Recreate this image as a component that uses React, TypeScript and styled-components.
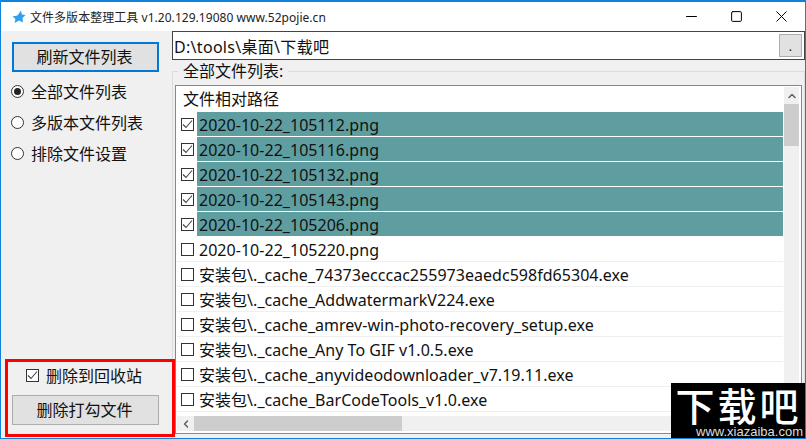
import styled, { createGlobalStyle } from 'styled-components';
import { Minus, Square, X, ChevronUp, ChevronLeft } from 'lucide-react';

const GlobalStyle = createGlobalStyle`
  html, body {
    margin: 0;
    padding: 0;
    overflow: hidden;
  }
`;

const Window = styled.div`
  position: relative;
  width: 806px;
  height: 439px;
  box-sizing: border-box;
  border: 1px solid #0f83dc;
  border-top-width: 2px;
  background: #f0f0f0;
  display: flex;
  flex-direction: column;
  overflow: hidden;
  font-family: "Noto Sans", "Noto Sans CJK SC", sans-serif;
  color: #111;
`;

const TitleBar = styled.div`
  height: 29px;
  flex: none;
  background: #fff;
  display: flex;
  align-items: center;
  padding-left: 11px;
`;

const TitleText = styled.span`
  margin-left: 4px;
  font-size: 12px;
  letter-spacing: 0.04px;
  color: #222;
`;

const WindowButtons = styled.div`
  margin-left: auto;
  padding-right: 1px;
  display: flex;
`;

const WindowButton = styled.div`
  width: 45px;
  height: 27px;
  display: flex;
  align-items: center;
  justify-content: center;
`;

const Body = styled.div`
  flex: 1;
  min-height: 0;
  display: flex;
`;

const Sidebar = styled.div`
  width: 171px;
  flex: none;
  box-sizing: border-box;
  padding: 11px 0 1px 4px;
  display: flex;
  flex-direction: column;
`;

const ActionButton = styled.button<{ $focused?: boolean }>`
  width: 147px;
  height: 30px;
  box-sizing: border-box;
  margin-left: 7px;
  padding: 0 2px 0 0;
  background: #e1e1e1;
  border: ${(p) => (p.$focused ? '2px solid #0078d7' : '1px solid #adadad')};
  font: inherit;
  font-size: 16px;
  line-height: 1;
  color: #111;
`;

const RadioGroup = styled.div`
  margin-top: 4px;
  display: flex;
  flex-direction: column;
`;

const RadioRow = styled.div`
  height: 31px;
  display: flex;
  align-items: center;
  margin-left: 6px;
  gap: 7px;
  font-size: 16px;
  line-height: 28px;
`;

const RadioMark = styled.span<{ $on?: boolean }>`
  width: 13px;
  height: 13px;
  box-sizing: border-box;
  border-radius: 50%;
  border: 1px solid #333;
  background: #fff;
  display: flex;
  align-items: center;
  justify-content: center;

  &::after {
    content: '';
    display: ${(p) => (p.$on ? 'block' : 'none')};
    width: 7px;
    height: 7px;
    border-radius: 50%;
    background: #222;
  }
`;

const DeleteBox = styled.div`
  position: relative;
  z-index: 1;
  margin: auto -3px 0 0;
  height: 78px;
  box-sizing: border-box;
  border: 3px solid #f00;
  padding-top: 1px;
  display: flex;
  flex-direction: column;

  ${ActionButton} {
    margin-left: 4px;
  }
`;

const DeleteCheckRow = styled.div`
  height: 24px;
  margin: 0 0 8px 18px;
  display: flex;
  align-items: center;
  gap: 7px;
  font-size: 16px;
`;

const CheckMark = styled.span`
  width: 13px;
  height: 13px;
  flex: none;
  box-sizing: border-box;
  border: 1px solid #333;
  background: #fff;
  display: flex;
  align-items: center;
  justify-content: center;
`;

const Main = styled.div`
  flex: 1;
  min-width: 0;
  display: flex;
  flex-direction: column;
`;

const PathBar = styled.div`
  height: 29px;
  flex: none;
  box-sizing: border-box;
  border: 1px solid #444;
  background: #fff;
  display: flex;
  align-items: center;
  justify-content: space-between;
  padding: 0 2px 0 1px;
  font-size: 16px;
  letter-spacing: 0.3px;
`;

const BrowseButton = styled.div`
  width: 23px;
  height: 23px;
  box-sizing: border-box;
  border: 1px solid #adadad;
  background: #e1e1e1;
  font-size: 12px;
  line-height: 24px;
  text-align: center;
`;

const GroupBox = styled.div`
  position: relative;
  flex: 1;
  min-height: 0;
  margin-top: 11px;
  border-top: 1px solid #dcdcdc;
  border-left: 1px solid #dcdcdc;
  border-right: 1px solid #dcdcdc;
  padding: 13px 2px 4px 2px;
  display: flex;
`;

const GroupLabel = styled.span`
  position: absolute;
  left: 5px;
  top: -11px;
  padding: 0 5px;
  background: #f0f0f0;
  font-size: 16px;
  line-height: 20px;
`;

const ListFrame = styled.div`
  flex: 1;
  min-width: 0;
  box-sizing: border-box;
  border: 1px solid #828790;
  background: #fff;
  display: grid;
  grid-template-columns: 1fr 15px;
  grid-template-rows: 1fr 15px;
  padding: 1px 2px 2px 1px;
`;

const ListBody = styled.div`
  min-width: 0;
  min-height: 0;
  margin-right: 1px;
  overflow: hidden;
`;

const ListHeader = styled.div`
  height: 25px;
  padding-left: 6px;
  font-size: 16px;
  line-height: 25px;
`;

const Row = styled.div<{ $selected?: boolean }>`
  height: 25px;
  box-sizing: border-box;
  border-bottom: 1px solid ${(p) => (p.$selected ? '#fff' : '#efefef')};
  display: flex;
  align-items: center;
  padding-left: 4px;
  font-size: 16px;
`;

const RowLabel = styled.span<{ $selected?: boolean }>`
  flex: 1;
  margin-left: 3px;
  padding-left: 2px;
  height: 24px;
  line-height: 26px;
  white-space: nowrap;
  letter-spacing: 0.03px;
  background: ${(p) => (p.$selected ? '#5f9ea0' : 'transparent')};
`;

const VScroll = styled.div`
  background: #f0f0f0;
  display: flex;
  flex-direction: column;
`;

const ScrollArrow = styled.div`
  height: 17px;
  flex: none;
  display: flex;
  align-items: center;
  justify-content: center;
  color: #606060;
`;

const VThumb = styled.div`
  height: 42px;
  background: #cdcdcd;
`;

const HScroll = styled.div`
  grid-column: 1;
  margin-right: 1px;
  background: #f0f0f0;
  display: flex;
`;

const HArrow = styled.div`
  width: 17px;
  flex: none;
  display: flex;
  align-items: center;
  justify-content: center;
  color: #606060;
`;

const HThumb = styled.div`
  width: 208px;
  background: #cdcdcd;
`;

const Watermark = styled.div`
  position: absolute;
  z-index: 2;
  right: -1px;
  bottom: -1px;
  width: 135px;
  height: 56px;
  box-sizing: border-box;
  padding-top: 1px;
  background: #000;
  color: #fff;
  display: flex;
  flex-direction: column;
  align-items: center;
`;

const WatermarkLogo = styled.div`
  font-family: "Noto Sans CJK SC", sans-serif;
  font-weight: 500;
  font-size: 39px;
  line-height: 41px;
  letter-spacing: 3px;
`;

const WatermarkUrl = styled.div`
  font-family: "Liberation Sans", sans-serif;
  font-size: 13px;
  line-height: 13px;
  align-self: flex-end;
  margin-right: 3px;
  color: #ddd;
`;

const Tick = () => (
  <svg width="11" height="11" viewBox="0 0 11 11" fill="none">
    <path d="M1 5.5 L4 8.5 L10 1.5" stroke="#444" strokeWidth="1.1" />
  </svg>
);

const files = [
  { name: '2020-10-22_105112.png', selected: true },
  { name: '2020-10-22_105116.png', selected: true },
  { name: '2020-10-22_105132.png', selected: true },
  { name: '2020-10-22_105143.png', selected: true },
  { name: '2020-10-22_105206.png', selected: true },
  { name: '2020-10-22_105220.png' },
  { name: '安装包\\._cache_74373ecccac255973eaedc598fd65304.exe' },
  { name: '安装包\\._cache_AddwatermarkV224.exe' },
  { name: '安装包\\._cache_amrev-win-photo-recovery_setup.exe' },
  { name: '安装包\\._cache_Any To GIF v1.0.5.exe' },
  { name: '安装包\\._cache_anyvideodownloader_v7.19.11.exe' },
  { name: '安装包\\._cache_BarCodeTools_v1.0.exe' },
];

const App = () => {
  return (
    <Window>
      <GlobalStyle />
      <TitleBar>
        <svg width="14" height="14" viewBox="0 0 14 14">
          <path d="M9 0.5 L9.8 4.5 L13.5 5 L10.5 8 L11 12.5 L7 10.5 L2.5 13 L3.5 9 L0.5 6.5 L5.5 5.5 Z" fill="#2f9fee" />
        </svg>
        <TitleText>文件多版本整理工具 v1.20.129.19080 www.52pojie.cn</TitleText>
        <WindowButtons>
          <WindowButton><Minus size={17} strokeWidth={1} color="#000" absoluteStrokeWidth /></WindowButton>
          <WindowButton><Square size={13} strokeWidth={1} color="#000" absoluteStrokeWidth /></WindowButton>
          <WindowButton><X size={19} strokeWidth={1} color="#000" absoluteStrokeWidth /></WindowButton>
        </WindowButtons>
      </TitleBar>
      <Body>
        <Sidebar>
          <ActionButton $focused>刷新文件列表</ActionButton>
          <RadioGroup>
            <RadioRow><RadioMark $on />全部文件列表</RadioRow>
            <RadioRow><RadioMark />多版本文件列表</RadioRow>
            <RadioRow><RadioMark />排除文件设置</RadioRow>
          </RadioGroup>
          <DeleteBox>
            <DeleteCheckRow><CheckMark><Tick /></CheckMark>删除到回收站</DeleteCheckRow>
            <ActionButton>删除打勾文件</ActionButton>
          </DeleteBox>
        </Sidebar>
        <Main>
          <PathBar>
            D:\tools\桌面\下载吧
            <BrowseButton>.</BrowseButton>
          </PathBar>
          <GroupBox>
            <GroupLabel>全部文件列表:</GroupLabel>
            <ListFrame>
              <ListBody>
                <ListHeader>文件相对路径</ListHeader>
                {files.map((f) => (
                  <Row key={f.name} $selected={f.selected}>
                    <CheckMark>{f.selected && <Tick />}</CheckMark>
                    <RowLabel $selected={f.selected}>{f.name}</RowLabel>
                  </Row>
                ))}
              </ListBody>
              <VScroll>
                <ScrollArrow><ChevronUp size={12} strokeWidth={3} /></ScrollArrow>
                <VThumb />
              </VScroll>
              <HScroll>
                <HArrow><ChevronLeft size={12} strokeWidth={3} /></HArrow>
                <HThumb />
              </HScroll>
            </ListFrame>
          </GroupBox>
        </Main>
      </Body>
      <Watermark>
        <WatermarkLogo>下载吧</WatermarkLogo>
        <WatermarkUrl>www.xiazaiba.com</WatermarkUrl>
      </Watermark>
    </Window>
  );
};

export default App;
